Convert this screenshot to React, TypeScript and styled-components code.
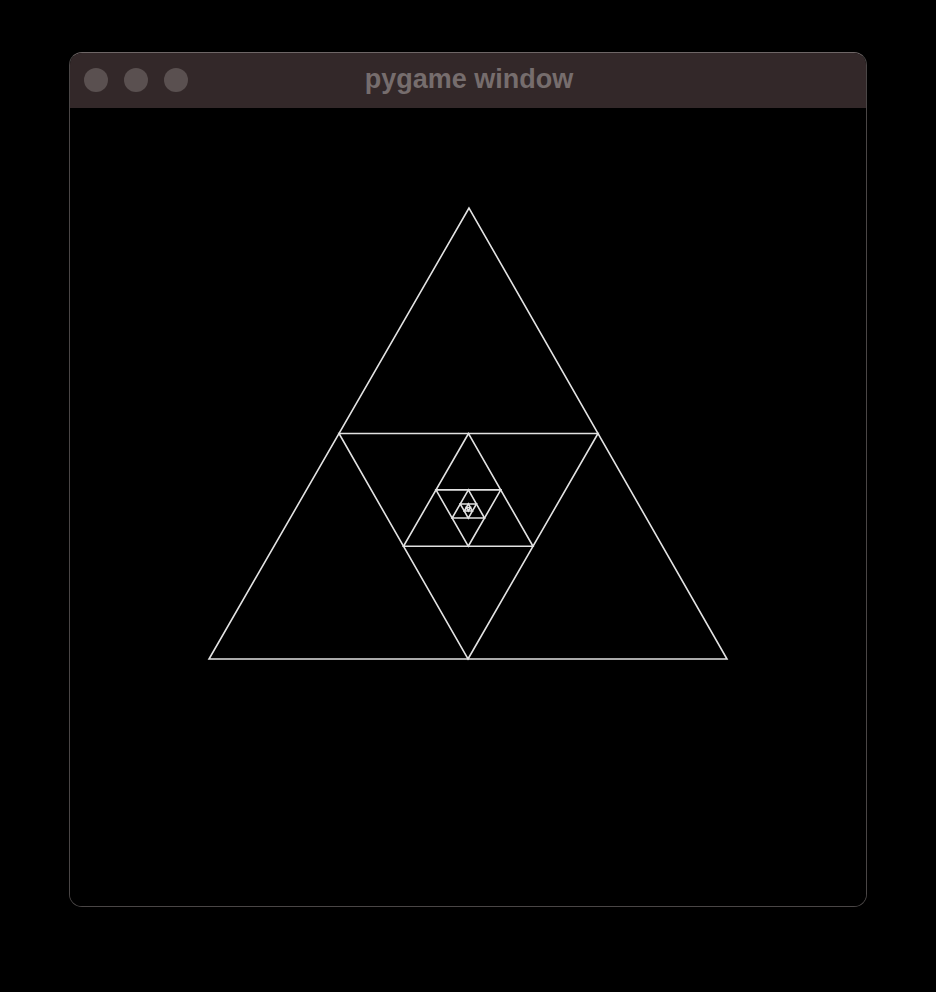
import React from 'react';
import styled, { createGlobalStyle } from 'styled-components';

type Pt = [number, number];

const GlobalStyle = createGlobalStyle`
  html, body {
    margin: 0;
    padding: 0;
    background: #000;
  }
`;

// nested triangles: each one is the medial triangle of the one before
const buildTriangles = (tri: Pt[]): Pt[][] => {
  const out: Pt[][] = [];
  let cur = tri;
  while (Math.abs(cur[1][0] - cur[2][0]) > 3) {
    out.push(cur);
    const mid = (a: Pt, b: Pt): Pt => [(a[0] + b[0]) / 2, (a[1] + b[1]) / 2];
    cur = [mid(cur[1], cur[2]), mid(cur[0], cur[2]), mid(cur[0], cur[1])];
  }
  return out;
};

const triangles = buildTriangles([
  [400, 101],
  [140, 552],
  [658, 552],
]);

const App = () => {
  return (
    <Page>
      <GlobalStyle />
      <Window>
        <TitleBar>
          <Lights>
            <Light />
            <Light />
            <Light />
          </Lights>
          <Title>pygame window</Title>
        </TitleBar>
        <Canvas>
          <svg width="796" height="798" viewBox="1 1 796 798">
            {triangles.map((t, i) => (
              <polygon
                key={i}
                points={t.map((p) => `${p[0]},${p[1]}`).join(' ')}
                fill="none"
                stroke="#e2e2e2"
                strokeWidth={1.6}
              />
            ))}
          </svg>
        </Canvas>
      </Window>
    </Page>
  );
};

const Page = styled.div`
  width: 936px;
  height: 992px;
  background: #000;
  padding: 52px 0 0 69px;
  box-sizing: border-box;
`;

const Window = styled.div`
  width: 798px;
  height: 855px;
  box-sizing: border-box;
  border: 1px solid #4a4646;
  border-top-color: #6e6666;
  border-radius: 13px;
  overflow: hidden;
  display: flex;
  flex-direction: column;
  background: #000;
`;

const TitleBar = styled.div`
  position: relative;
  height: 55px;
  flex-shrink: 0;
  background: #332829;
  display: flex;
  align-items: center;
  justify-content: center;
`;

const Lights = styled.div`
  position: absolute;
  left: 14px;
  top: 15px;
  display: flex;
  gap: 16px;
`;

const Light = styled.div`
  width: 24px;
  height: 24px;
  border-radius: 50%;
  background: #5a5050;
`;

const Title = styled.div`
  font-family: 'Liberation Sans', Arial, sans-serif;
  font-weight: bold;
  font-size: 27px;
  color: #766d6d;
  margin-top: -3px;
  margin-left: 2px;
`;

const Canvas = styled.div`
  flex: 1;
  background: #000;
  svg {
    display: block;
  }
`;

export default App;
